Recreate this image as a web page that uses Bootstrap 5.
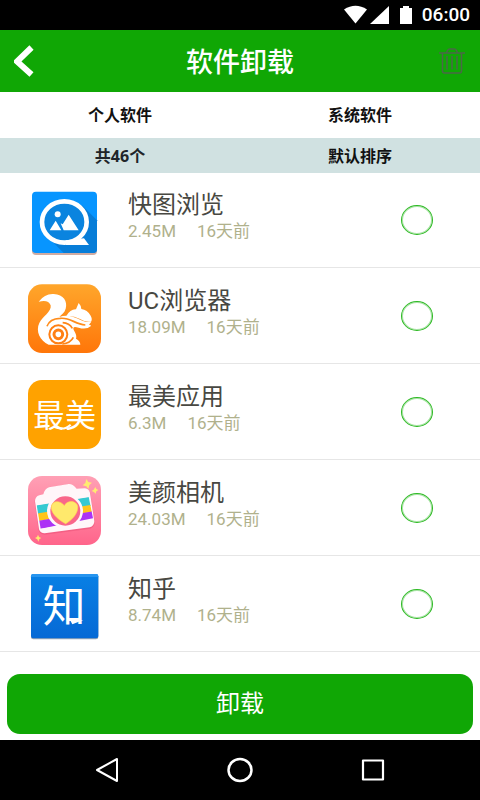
<!DOCTYPE html>
<html lang="zh-CN">
<head>
<meta charset="utf-8">
<meta name="viewport" content="width=device-width, initial-scale=1">
<title>软件卸载</title>
<link href="https://cdn.jsdelivr.net/npm/bootstrap@5.3.0/dist/css/bootstrap.min.css" rel="stylesheet">
<style>
  :root { --brand: #10a705; }
  body { font-family: Roboto, "Noto Sans CJK SC", sans-serif; background: #fff; }
  svg { display: block; }
  .status-bar { height: 30px; gap: 9px; padding-right: 10px; font-size: 19px; line-height: 30px; font-weight: 500; }
  .title-bar { height: 62px; padding: 0 14px; background: var(--brand); }
  .title-bar h1 { padding-top: 4px; font-size: 27px; line-height: 40px; font-weight: 500; }
  .title-bar button { width: 28px; }
  .filters { font-family: "Noto Sans", "Noto Sans CJK SC", sans-serif; font-size: 16px; font-weight: 700; }
  .filters a { color: #111; }
  .filter-tabs { line-height: 46px; }
  .filter-sort { padding-top: 1px; line-height: 34px; background: #d0e1e1; }
  .app-row { padding: 16px 47px 10px 28px; border-bottom: 1px solid #e6e6e6; }
  .app-row:first-child { padding-top: 15px; }
  .app-text { margin: 3px 0 0 27px; }
  .app-name { font-size: 24px; line-height: 28px; font-weight: 400; color: #484842; }
  .app-meta { gap: 21px; font-size: 17px; line-height: 24px; color: #b0b18c; }
  .app-row .form-check-input { width: 32px; height: 30px; margin: 17px 0 0; border: 1px solid #2cb922; border-radius: 50%; box-shadow: 0 0 0 1px #2cb92266 inset; }
  .form-check-input:checked { background-color: var(--brand); }
  .action-area { padding: 22px 7px 6px; }
  .btn-uninstall { height: 60px; border-radius: 13px; background: var(--brand); color: #fff; font-size: 24px; line-height: 36px; }
  .btn-uninstall:hover { background: #0c8d03; color: #fff; }
  .system-nav { height: 60px; padding: 0 41px; }
</style>
<script src="https://cdn.jsdelivr.net/npm/bootstrap@5.3.0/dist/js/bootstrap.bundle.min.js"></script>
</head>
<body class="min-vh-100 d-flex flex-column">

<div class="status-bar bg-black text-white d-flex align-items-center justify-content-end">
  <svg width="70" height="20" viewBox="0 0 70 20" fill="#fff" aria-hidden="true">
    <path d="M1 4.500Q12.500-3 24 4.500L12.500 18.500Z"/>
    <path d="M46 1V19H27Z"/>
    <path d="M57 3h3V1h6v2h3v16H57Z"/>
  </svg>
  <span>06:00</span>
</div>

<header class="title-bar d-flex align-items-center justify-content-between text-white">
  <button type="button" class="btn p-0 border-0" aria-label="返回">
    <svg width="20" height="32" viewBox="0 0 20 32" fill="none" stroke="#fff" stroke-width="6"><path d="M17.500 2.500 3 16.500 17.500 29.500"/></svg>
  </button>
  <h1 class="mb-0">软件卸载</h1>
  <button type="button" class="btn p-0 border-0" aria-label="删除">
    <svg width="28" height="28" viewBox="0 0 28 28" fill="none" stroke="#4b6848" stroke-width="1.500"><path d="M1 6H27M8.500 6Q9.500 2 12 2H16Q18.500 2 19.500 6M4.500 6V24Q4.500 26 6.500 26H21.500Q23.500 26 23.500 24V6M9 9V22.500M14 9V22.500M19 9V22.500"/></svg>
  </button>
</header>

<nav class="filters text-center" aria-label="筛选">
  <div class="filter-tabs row g-0">
    <a class="col text-decoration-none" href="#personal">个人软件</a>
    <a class="col text-decoration-none" href="#system">系统软件</a>
  </div>
  <div class="filter-sort row g-0">
    <span class="col">共46个</span>
    <a class="col text-decoration-none" href="#sort">默认排序</a>
  </div>
</nav>

<main class="flex-grow-1 d-flex flex-column">
  <ul class="list-unstyled m-0">
    <li class="app-row d-flex align-items-start">
      <svg width="73" height="69" viewBox="36 27 219 207" aria-hidden="true">
        <rect x="48" y="44" width="195" height="184" rx="12" fill="#d0aba2"/>
        <rect x="48" y="38" width="195" height="184" rx="12" fill="#0795ff"/>
        <path d="M198 79 243 124V210Q243 222 231 222H143L93 171Z" fill="#077dd8"/>
        <ellipse cx="145" cy="129" rx="67" ry="62" fill="#0a84df" stroke="#fff" stroke-width="14"/>
        <path d="M204 178 219 198H150V184Z" fill="#fff"/>
        <circle cx="125" cy="106" r="9" fill="#fff"/>
        <path d="M101 154 119 125 136 154ZM134 133 140 136 158 107 188 154H143Z" fill="#fff"/>
      </svg>
      <div class="app-text flex-grow-1">
        <h2 class="app-name m-0"><label for="app1">快图浏览</label></h2>
        <div class="app-meta d-flex"><span>2.45M</span><span>16天前</span></div>
      </div>
      <input class="form-check-input" type="checkbox" id="app1">
    </li>
    <li class="app-row d-flex align-items-start">
      <svg width="73" height="69" viewBox="36 27 219 207" aria-hidden="true">
        <defs><linearGradient id="ucFill" x2="0" y2="1"><stop stop-color="#ffa62b"/><stop offset="1" stop-color="#ff7609"/></linearGradient></defs>
        <rect x="36" y="28" width="219" height="206" rx="42" fill="url(#ucFill)"/>
        <path d="M68 80Q87 55 113 57C143 58 155 80 149 101C146 113 136 119 130 126Q149 119 170 125Q184 130 199 137Q211 142 226 140L219 149Q226 150 225 153Q211 165 188 158Q164 150 176 170Q183 182 180 191Q193 198 193 209H98C72 198 58 168 70 144C78 126 108 110 104 91Q97 72 68 80Z" fill="#fff"/>
        <path d="M151 123Q163 102 180 103L188 84Q195 91 196 102Q214 104 224 122Q230 133 225 140Q207 142 192 132Q174 122 151 123Z" fill="#fff"/>
        <path d="M93 154Q101 131 132 130C163 126 176 148 208 150" fill="none" stroke="#ff8c1b" stroke-width="5"/>
        <path d="M140 143Q160 144 169 160M139 207Q164 204 172 187" fill="none" stroke="#ff8517" stroke-width="5"/>
        <circle cx="127" cy="178" r="27" fill="none" stroke="#ff7f14" stroke-width="6"/>
        <circle cx="127" cy="178" r="13" fill="none" stroke="#ff7f14" stroke-width="9"/>
      </svg>
      <div class="app-text flex-grow-1">
        <h2 class="app-name m-0"><label for="app2">UC浏览器</label></h2>
        <div class="app-meta d-flex"><span>18.09M</span><span>16天前</span></div>
      </div>
      <input class="form-check-input" type="checkbox" id="app2">
    </li>
    <li class="app-row d-flex align-items-start">
      <svg width="73" height="69" viewBox="36 30 219 207" aria-hidden="true">
        <rect x="36" y="30" width="219" height="207" rx="42" fill="#ffa200"/>
        <text x="146" y="171" text-anchor="middle" font-family="Noto Sans CJK SC, sans-serif" font-weight="400" font-size="94" fill="#fff">最美</text>
        <path d="M112 170Q143 184 164 164" fill="none" stroke="#fff" stroke-width="6"/>
      </svg>
      <div class="app-text flex-grow-1">
        <h2 class="app-name m-0"><label for="app3">最美应用</label></h2>
        <div class="app-meta d-flex"><span>6.3M</span><span>16天前</span></div>
      </div>
      <input class="form-check-input" type="checkbox" id="app3">
    </li>
    <li class="app-row d-flex align-items-start">
      <svg width="73" height="69" viewBox="36 30 219 207" aria-hidden="true">
        <defs>
          <linearGradient id="camFill" x2="0" y2="1"><stop stop-color="#ffa0b5"/><stop offset="1" stop-color="#ff658b"/></linearGradient>
          <clipPath id="camBand"><path d="M62 117 218 92 231 157 74 188Z"/></clipPath>
        </defs>
        <rect x="36" y="30" width="219" height="207" rx="42" fill="url(#camFill)"/>
        <path d="M70 90 83 87Q86 70 98 65L158 55Q171 54 182 70L207 69Q219 70 223 82L236 169Q236 184 222 188L86 206Q72 206 68 193L56 108Q56 93 70 90Z" fill="#e94e75" opacity=".5"/>
        <path d="M70 88 82 85Q86 69 99 64L158 54Q171 53 182 68L207 67Q218 68 222 80L235 166Q235 180 221 184L86 202Q73 202 69 190L57 106Q57 92 70 88Z" fill="#fff6f9"/>
        <g clip-path="url(#camBand)">
          <path d="M55 119 225 92 230 119 60 145Z" fill="#35c9d1"/>
          <path d="M60 143 229 116 233 137 64 166Z" fill="#ffc51a"/>
          <path d="M64 165 235 135 239 160 68 190Z" fill="#ac32f5"/>
        </g>
        <ellipse cx="147" cy="135" rx="54" ry="51" fill="#fff6f9"/>
        <ellipse cx="148" cy="135" rx="45" ry="44" fill="#f9668a"/>
        <path d="M149 173C132 164 106 145 106 124C106 104 132 101 145 119C154 101 182 104 185 121C187 145 164 164 149 173Z" fill="#ffe96c" stroke="#ffdb50" stroke-width="2"/>
        <path d="M211 39 217 48 228 50 220 57 217 69 211 61 200 58 208 51ZM238 63 241 69 247 72 241 76 239 83 234 78 227 75 233 71ZM66 206 69 213 76 216 70 219 67 227 64 220 57 216 63 213Z" fill="#ffeb70"/>
      </svg>
      <div class="app-text flex-grow-1">
        <h2 class="app-name m-0"><label for="app4">美颜相机</label></h2>
        <div class="app-meta d-flex"><span>24.03M</span><span>16天前</span></div>
      </div>
      <input class="form-check-input" type="checkbox" id="app4">
    </li>
    <li class="app-row d-flex align-items-start">
      <svg width="73" height="69" viewBox="36 36 219 207" aria-hidden="true">
        <defs><linearGradient id="zhiFill" x2="0" y2="1"><stop stop-color="#0880e5"/><stop offset="1" stop-color="#0669d5"/></linearGradient></defs>
        <rect x="45" y="45" width="202" height="193" rx="7" fill="#9da8b5"/>
        <rect x="45" y="42" width="202" height="193" rx="7" fill="url(#zhiFill)"/>
        <path d="M45 51V49Q45 42 52 42H240Q247 42 247 49V51Z" fill="#2795ef"/>
        <text x="144" y="185" text-anchor="middle" font-family="Noto Sans CJK SC, sans-serif" font-weight="400" font-size="128" fill="#fff">知</text>
        <path d="M162 180H202L169 193Z" fill="#fff"/>
      </svg>
      <div class="app-text flex-grow-1">
        <h2 class="app-name m-0"><label for="app5">知乎</label></h2>
        <div class="app-meta d-flex"><span>8.74M</span><span>16天前</span></div>
      </div>
      <input class="form-check-input" type="checkbox" id="app5">
    </li>
  </ul>
  <div class="action-area mt-auto">
    <button type="button" class="btn btn-uninstall w-100 border-0">卸载</button>
  </div>
</main>

<nav class="system-nav bg-black d-flex align-items-center" aria-label="系统导航">
  <button type="button" class="btn p-0 border-0 flex-fill d-flex justify-content-center" aria-label="后退">
    <svg width="24" height="26" viewBox="0 0 24 26" fill="none" stroke="#fff" stroke-width="2" stroke-linejoin="round"><path d="M22 2V24L2 13Z"/></svg>
  </button>
  <button type="button" class="btn p-0 border-0 flex-fill d-flex justify-content-center" aria-label="主屏幕">
    <svg width="26" height="26" viewBox="0 0 26 26" fill="none" stroke="#fff" stroke-width="2.500"><ellipse cx="13" cy="13" rx="11.500" ry="11"/></svg>
  </button>
  <button type="button" class="btn p-0 border-0 flex-fill d-flex justify-content-center" aria-label="最近任务">
    <svg width="24" height="24" viewBox="0 0 24 24" fill="none" stroke="#fff" stroke-width="2.200" stroke-linejoin="round"><rect x="2" y="2.500" width="20" height="19"/></svg>
  </button>
</nav>
</body>
</html>
